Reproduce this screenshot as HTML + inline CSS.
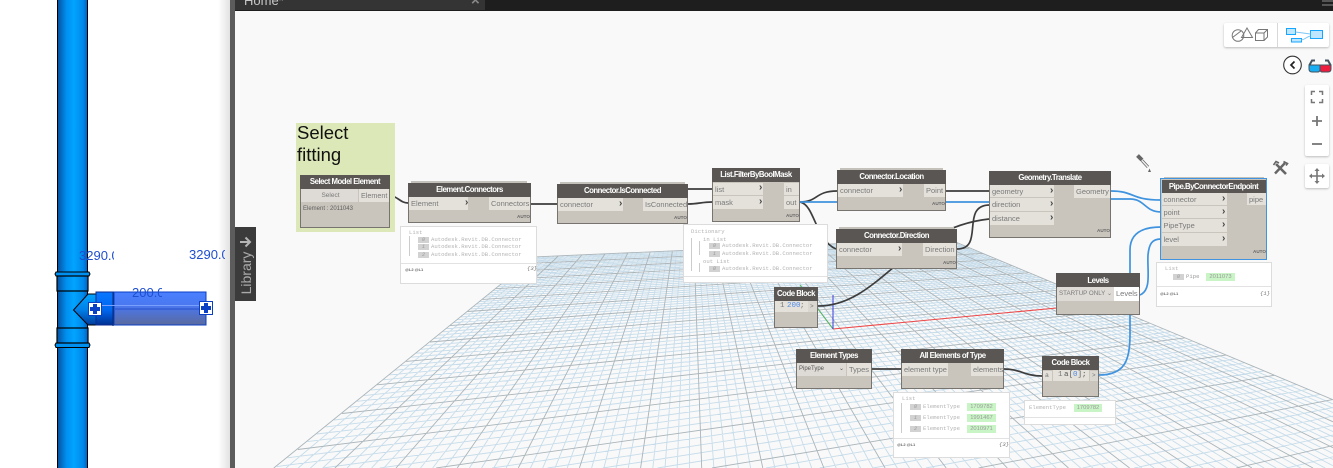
<!DOCTYPE html>
<html><head><meta charset="utf-8"><style>
html,body{margin:0;padding:0;width:1333px;height:468px;overflow:hidden;background:#fff;font-family:"Liberation Sans",sans-serif}
div,span{position:absolute}
svg{position:absolute;left:0;top:0}
#root{left:0;top:0;width:1333px;height:468px;overflow:hidden}
.b{background:#c9c4bc;border:1px solid #77736e;box-sizing:border-box}
.t{background:#5a5653;color:#fff;font:bold 7.8px/14px "Liberation Sans",sans-serif;letter-spacing:-.5px;text-align:center;white-space:nowrap}
.p{background:#e4e1da;color:#7a7a7a;font:7.5px/13px "Liberation Sans",sans-serif;padding-left:2px;box-sizing:border-box;white-space:nowrap}
.c{color:#444;font:bold 10px/12px "Liberation Sans",sans-serif}
.a{color:#666;font:bold 4.6px/6px "Liberation Sans",sans-serif}
.v{background:#fff;border:1px solid #dcdcdc;box-sizing:border-box}
.m{color:#b3b3b3;font:5.6px/7px "Liberation Mono",monospace;white-space:nowrap}
.i{background:#d2d2d2;color:#999;font:italic 5px/6px "Liberation Mono",monospace;text-align:center;width:11px;height:6px}
.g{background:#c9f5c6;color:#9a9a9a;font:5.8px/8px "Liberation Sans",sans-serif;text-align:center;height:8px}
.l{background:#e2e2e2;height:1px}
.d{color:#1f4fcf;font:13px/14px "Liberation Sans",sans-serif;overflow:hidden;white-space:nowrap}
.s{background:#fff;border-radius:2px;box-shadow:0 1px 2px rgba(0,0,0,.25)}
.f{color:#666;font:bold 4px/5px "Liberation Sans",sans-serif;white-space:nowrap}
#ui{left:0;top:0;width:1333px;height:468px;filter:blur(.25px)}
</style></head><body><div id="root">
<div style="left:0;top:0;width:228px;height:468px;background:#fff"></div>
<div style="left:218px;top:0;width:12px;height:468px;background:linear-gradient(90deg,#fff,#e2e2e2)"></div>
<div style="left:235px;top:11px;width:1098px;height:457px;background:#f9f9f9"></div>
<div style="left:235px;top:0;width:1098px;height:11px;background:#1e1e1e"></div>
<div style="left:235px;top:0;width:250px;height:10px;background:#343434;overflow:hidden"><span style="left:9px;top:-7px;color:#c8c8c8;font:13px/16px 'Liberation Sans',sans-serif">Home*</span><span style="left:236px;top:-7px;color:#888;font:bold 15px/16px 'Liberation Sans',sans-serif">×</span></div>
<div style="left:1322px;top:0;width:11px;height:2px;background:#555"></div>
<div style="left:1322px;top:4px;width:11px;height:2px;background:#555"></div>

<svg width="1333" height="468" viewBox="0 0 1333 468">
<defs><linearGradient id="pg" x1="0" x2="1" y1="0" y2="0"><stop offset="0" stop-color="#07509f"/><stop offset=".3" stop-color="#0090f0"/><stop offset=".55" stop-color="#00a4ff"/><stop offset=".85" stop-color="#0088ea"/><stop offset="1" stop-color="#0060c0"/></linearGradient>
<linearGradient id="bg1" x1="0" x2="0" y1="0" y2="1"><stop offset="0" stop-color="#0a78ff"/><stop offset=".55" stop-color="#0066ee"/><stop offset="1" stop-color="#00308f"/></linearGradient>
<linearGradient id="bg2" x1="0" x2="0" y1="0" y2="1"><stop offset="0" stop-color="#4a80ff"/><stop offset=".4" stop-color="#4a78f0"/><stop offset="1" stop-color="#5a6a9e"/></linearGradient>
<linearGradient id="bg3" x1="0" x2="0" y1="0" y2="1"><stop offset="0" stop-color="#00a4ff"/><stop offset=".5" stop-color="#0080e8"/><stop offset="1" stop-color="#003c9c"/></linearGradient></defs>
<rect x="57.5" y="0" width="30" height="468" fill="url(#pg)"/>
<path d="M57.500 0V468M87.500 0V468" stroke="#000" stroke-width="1"/>
<path d="M56 272H89L90 274 89 276H56L55 274Z" fill="#0090f0" stroke="#000" stroke-width="1"/>
<rect x="57" y="276" width="31" height="15" fill="url(#pg)" stroke="#000" stroke-width="1.2"/>
<path d="M56 343H89L90 345 89 347.500H56L55 345Z" fill="#0090f0" stroke="#000" stroke-width="1"/>
<rect x="57" y="328" width="31" height="15" fill="url(#pg)" stroke="#000" stroke-width="1.2"/>
<path d="M88 294H96V325H88L73.500 310Z" fill="url(#bg3)" stroke="#000" stroke-width="1"/>
<path d="M96 292H113V325H96Z" fill="url(#bg1)" stroke="#0a2a90" stroke-width="1"/>
<path d="M113 292V326" stroke="#0a2a70" stroke-width="1"/>
<path d="M114 292H206V325H114Z" fill="url(#bg2)" stroke="#0b3fc4" stroke-width="1"/>
<path d="M100 305.500H206" stroke="#7aa0ff" stroke-width="1"/>
<path d="M115 309H206" stroke="#1845c8" stroke-width=".8"/>
<g fill="#fff" stroke="#0b3fc4" stroke-width="1"><rect x="88.500" y="302.500" width="13" height="13"/><rect x="199.500" y="301.500" width="13" height="13"/></g>
<g fill="#0b3fc4"><path d="M93 304h4v3h3v4h-3v3h-4v-3h-3v-4h3z"/><path d="M204 303h4v3h3v4h-3v3h-4v-3h-3v-4h3z"/></g>
</svg>
<div class="d" style="left:79px;top:249px;width:35px">3290.0</div>
<div class="d" style="left:189px;top:248px;width:36px">3290.0</div>
<div class="d" style="left:132px;top:286px;width:30px">200.0</div>

<svg id="g" width="1333" height="468" viewBox="0 0 1333 468" fill="none"></svg>
<script>
(function(){
var VA=[690,131],VB=[2520,170],minor='',major='';
function clip(x1,y1,x2,y2){var t0=0,t1=1,dx=x2-x1,dy=y2-y1,ps=[-dx,dx,-dy,dy],qs=[x1-235,1333-x1,y1-11,468-y1];
for(var j=0;j<4;j++){if(ps[j]==0){if(qs[j]<0)return null;continue;}var r=qs[j]/ps[j];if(ps[j]<0){if(r>t1)return null;if(r>t0)t0=r;}else{if(r<t0)return null;if(r<t1)t1=r;}}
return [x1+t0*dx,y1+t0*dy,x1+t1*dx,y1+t1*dy];}
function seg(x1,y1,x2,y2,i){var c=clip(x1,y1,x2,y2);if(!c)return;var s='M'+c[0].toFixed(1)+' '+c[1].toFixed(1)+'L'+c[2].toFixed(1)+' '+c[3].toFixed(1);if(i%5==0)major+=s;else minor+=s;}
for(var i=0;i<=100;i++){var X=275+12.19*i,dx=X-VA[0];var t=119.2/(336+.0438*dx);seg(VA[0]+t*dx,VA[1]+336*t,VA[0]+2*dx,VA[1]+672,i);}
for(var k=0;k<=84;k++){var d=.00794-.00008*k;if(d<=0.0012)break;var Ly=131+1/d,Lx=275+(468-Ly)/.813,m=(VB[1]-Ly)/(VB[0]-Lx);var x=(Ly-m*Lx-243+.417*957)/(.417-m);seg(Lx,Ly,x,Ly+m*(x-Lx),k);}
document.getElementById('g').innerHTML='<path d="'+minor+'" stroke="#c6dcea" stroke-width=".9"/><path d="'+major+'" stroke="#aab5ba" stroke-width=".9"/>';
})();
</script>
<div style="left:230px;top:0;width:5px;height:468px;background:#5c5c5c"></div>

<div id="ui">
<svg width="1333" height="468" viewBox="0 0 1333 468" fill="none">
<path d="M833 329L1057 308" stroke="#f04848" stroke-width="1"/>
<path d="M833 329L800 285" stroke="#4caf50" stroke-width="1"/>
<path d="M833 329V295" stroke="#3a3adf" stroke-width="1"/>
<g stroke="#3d3d3d" stroke-width="1.7">
<path d="M390 196C398 196 400 203 408 203"/>
<path d="M531 204H557"/>
<path d="M688 189C698 189 702 189 712 189"/>
<path d="M688 204C698 204 702 202 712 202"/>
<path d="M800 202C818 202 815 191 837 191"/>
<path d="M800 202C815 205 815 240 836 249"/>
<path d="M946 191H989"/>
<path d="M957 249C985 249 960 206 989 205"/>
<path d="M818 306C880 306 905 228 989 219"/>
<path d="M872 369H901"/>
<path d="M1004 369C1020 369 1025 376 1042 376"/>
</g>
<g stroke="#3f93df" stroke-width="1.7">
<path d="M800 202H950C965 202 975 202 989 202"/>
<path d="M1111 191C1135 191 1130 200 1161 200"/>
<path d="M1111 199H1130C1145 199 1145 212 1161 212"/>
<path d="M1099 375C1125 375 1130 360 1130 335V250C1130 235 1140 227 1161 227"/>
<path d="M1140 295C1152 290 1147 270 1148 255C1149 244 1152 239 1161 239"/>
</g>
</svg>

<!-- note -->
<div style="left:296px;top:123px;width:99px;height:109px;background:#dde8b8"></div>
<div style="left:297px;top:122px;color:#111;font:18.500px/22px 'Liberation Sans',sans-serif">Select<br>fitting</div>

<!-- Select Model Element -->
<div class="b" style="left:300px;top:175px;width:90px;height:53px"></div>
<div class="t" style="left:300px;top:175px;width:90px">Select Model Element</div>
<div class="p" style="left:301px;top:189px;width:57px;height:13px;background:#dedbd6;text-align:center;font-size:6.500px">Select</div>
<div class="p" style="left:359px;top:189px;width:30px;height:13px;font-size:7.200px">Element</div>
<div style="left:303px;top:205px;color:#5f5f5f;font:6px/8px 'Liberation Sans',sans-serif;white-space:nowrap">Element : 2011043</div>

<!-- Element.Connectors -->
<div style="left:411px;top:181px;width:116px;height:3px;background:#c4c0ba"></div>
<div class="b" style="left:408px;top:183px;width:123px;height:40px"></div>
<div class="t" style="left:408px;top:183px;width:123px">Element.Connectors</div>
<div class="p" style="left:409px;top:197px;width:59px;height:13px">Element</div><div class="c" style="left:465px;top:197px">›</div>
<div class="p" style="left:489px;top:197px;width:41px;height:13px">Connectors</div>
<div class="a" style="left:517px;top:214px">AUTO</div>

<!-- Connector.IsConnected -->
<div style="left:560px;top:182px;width:125px;height:3px;background:#c4c0ba"></div>
<div class="b" style="left:557px;top:184px;width:131px;height:40px"></div>
<div class="t" style="left:557px;top:184px;width:131px">Connector.IsConnected</div>
<div class="p" style="left:558px;top:198px;width:65px;height:13px">connector</div><div class="c" style="left:619px;top:198px">›</div>
<div class="p" style="left:643px;top:198px;width:44px;height:13px">IsConnected</div>
<div class="a" style="left:674px;top:215px">AUTO</div>

<!-- List.FilterByBoolMask -->
<div class="b" style="left:712px;top:168px;width:88px;height:54px"></div>
<div class="t" style="left:712px;top:168px;width:88px">List.FilterByBoolMask</div>
<div class="p" style="left:713px;top:183px;width:50px;height:12px">list</div><div class="c" style="left:759px;top:182px">›</div>
<div class="p" style="left:713px;top:196px;width:50px;height:13px">mask</div><div class="c" style="left:759px;top:196px">›</div>
<div class="p" style="left:784px;top:183px;width:15px;height:12px">in</div>
<div class="p" style="left:784px;top:196px;width:15px;height:13px">out</div>
<div class="a" style="left:786px;top:213px">AUTO</div>

<!-- Connector.Location -->
<div style="left:840px;top:168px;width:103px;height:3px;background:#c4c0ba"></div>
<div class="b" style="left:837px;top:170px;width:109px;height:41px"></div>
<div class="t" style="left:837px;top:170px;width:109px">Connector.Location</div>
<div class="p" style="left:838px;top:184px;width:65px;height:13px">connector</div><div class="c" style="left:899px;top:184px">›</div>
<div class="p" style="left:924px;top:184px;width:21px;height:13px">Point</div>
<div class="a" style="left:932px;top:201px">AUTO</div>

<!-- Geometry.Translate -->
<div class="b" style="left:989px;top:171px;width:122px;height:67px"></div>
<div class="t" style="left:989px;top:171px;width:122px">Geometry.Translate</div>
<div class="p" style="left:990px;top:185px;width:64px;height:12px">geometry</div><div class="c" style="left:1050px;top:185px">›</div>
<div class="p" style="left:990px;top:198px;width:64px;height:13px">direction</div><div class="c" style="left:1050px;top:198px">›</div>
<div class="p" style="left:990px;top:212px;width:64px;height:13px">distance</div><div class="c" style="left:1050px;top:212px">›</div>
<div class="p" style="left:1074px;top:185px;width:36px;height:13px">Geometry</div>
<div class="a" style="left:1097px;top:228px">AUTO</div>

<!-- Connector.Direction -->
<div style="left:839px;top:227px;width:115px;height:3px;background:#c4c0ba"></div>
<div class="b" style="left:836px;top:229px;width:121px;height:40px"></div>
<div class="t" style="left:836px;top:229px;width:121px">Connector.Direction</div>
<div class="p" style="left:837px;top:243px;width:65px;height:13px">connector</div><div class="c" style="left:898px;top:243px">›</div>
<div class="p" style="left:923px;top:243px;width:33px;height:13px">Direction</div>
<div class="a" style="left:943px;top:260px">AUTO</div>

<!-- Pipe.ByConnectorEndpoint -->
<div style="left:1164px;top:177px;width:100px;height:3px;background:#c4c0ba"></div>
<div class="b" style="left:1160px;top:178px;width:107px;height:82px;border:1.500px solid #3f93df"></div>
<div class="t" style="left:1161.500px;top:179.500px;width:104px;height:13.500px">Pipe.ByConnectorEndpoint</div>
<div class="p" style="left:1161.500px;top:193px;width:65px;height:12px">connector</div><div class="c" style="left:1222px;top:193px">›</div>
<div class="p" style="left:1161.500px;top:206px;width:65px;height:12px">point</div><div class="c" style="left:1222px;top:206px">›</div>
<div class="p" style="left:1161.500px;top:219px;width:65px;height:13px">PipeType</div><div class="c" style="left:1222px;top:219px">›</div>
<div class="p" style="left:1161.500px;top:233px;width:65px;height:13px">level</div><div class="c" style="left:1222px;top:233px">›</div>
<div class="p" style="left:1247px;top:193px;width:19px;height:12px">pipe</div>
<div class="a" style="left:1253px;top:249px">AUTO</div>

<!-- Levels -->
<div class="b" style="left:1056px;top:273px;width:84px;height:42px"></div>
<div class="t" style="left:1056px;top:273px;width:84px;line-height:15px">Levels</div>
<div class="p" style="left:1057px;top:287px;width:57px;height:14px;background:#dedbd6;font-size:6.200px;line-height:14px">STARTUP ONLY<span style="left:50px;top:0;font-size:6px">⌄</span></div>
<div class="p" style="left:1114px;top:287px;width:25px;height:14px;background:#fff;line-height:14px">Levels</div>

<!-- Code Block 200 -->
<div class="b" style="left:774px;top:287px;width:44px;height:41px"></div>
<div class="t" style="left:774px;top:287px;width:44px">Code Block</div>
<div class="p" style="left:775px;top:301px;width:42px;height:11px;padding-left:5px;font:7.500px/11px 'Liberation Mono',monospace">1<span style="left:12px;top:0;color:#4f8be8">200</span><span style="left:25px;top:0">;</span></div>
<div class="p" style="left:808px;top:301px;width:9px;height:11px;background:#dad7d0;font:6px/11px 'Liberation Mono',monospace">&gt;</div>

<!-- Element Types -->
<div class="b" style="left:796px;top:349px;width:76px;height:40px"></div>
<div class="t" style="left:796px;top:349px;width:76px">Element Types</div>
<div class="p" style="left:797px;top:363px;width:49px;height:13px;background:#dedbd6;font-size:6px;color:#555">PipeType<span style="left:42px;top:0">⌄</span></div>
<div class="p" style="left:847px;top:363px;width:24px;height:13px">Types</div>

<!-- All Elements of Type -->
<div class="b" style="left:901px;top:349px;width:103px;height:40px"></div>
<div class="t" style="left:901px;top:349px;width:103px">All Elements of Type</div>
<div class="p" style="left:902px;top:363px;width:46px;height:13px">element type</div>
<div class="p" style="left:971px;top:363px;width:32px;height:13px">elements</div>

<!-- Code Block 2 -->
<div class="b" style="left:1042px;top:356px;width:57px;height:41px"></div>
<div class="t" style="left:1042px;top:356px;width:57px">Code Block</div>
<div class="p" style="left:1043px;top:371px;width:9px;height:10px;font:6.500px/10px 'Liberation Mono',monospace">a</div>
<div class="p" style="left:1053px;top:370px;width:36px;height:11px;padding-left:5px;font:7.500px/11px 'Liberation Mono',monospace">1<span style="left:11px;top:0;color:#555">a[<span style="position:static;color:#4f8be8">0</span>];</span></div>
<div class="p" style="left:1090px;top:371px;width:8px;height:10px;background:#dad7d0;font:6px/10px 'Liberation Mono',monospace">&gt;</div>

<!-- Preview 1 -->
<div class="v" style="left:400px;top:226px;width:137px;height:58px"></div>
<div class="m" style="left:409px;top:229px">List</div>
<div style="left:409px;top:236px;width:1px;height:20px;background:#ccc"></div>
<div class="i" style="left:418px;top:237px">0</div><div class="m" style="left:431px;top:236px">Autodesk.Revit.DB.Connector</div>
<div class="i" style="left:418px;top:244px">1</div><div class="m" style="left:431px;top:243px">Autodesk.Revit.DB.Connector</div>
<div class="i" style="left:418px;top:252px">2</div><div class="m" style="left:431px;top:251px">Autodesk.Revit.DB.Connector</div>
<div class="l" style="left:401px;top:263px;width:135px"></div>
<div class="f" style="left:405px;top:267px">@L2 @L1</div><div class="m" style="left:527px;top:265px;color:#777;font-style:italic">{3}</div>

<!-- Preview 2 -->
<div class="v" style="left:683px;top:224px;width:145px;height:59px"></div>
<div class="m" style="left:691px;top:228px">Dictionary</div>
<div style="left:691px;top:238px;width:1px;height:33px;background:#ccc"></div>
<div style="left:699px;top:241px;width:1px;height:14px;background:#ccc"></div>
<div style="left:699px;top:263px;width:1px;height:9px;background:#ccc"></div>
<div class="m" style="left:703px;top:236px">in List</div><div class="m" style="left:703px;top:258px">out List</div>
<div class="i" style="left:709px;top:243px">0</div><div class="m" style="left:722px;top:242px">Autodesk.Revit.DB.Connector</div>
<div class="i" style="left:709px;top:251px">1</div><div class="m" style="left:722px;top:250px">Autodesk.Revit.DB.Connector</div>
<div class="i" style="left:709px;top:266px">0</div><div class="m" style="left:722px;top:265px">Autodesk.Revit.DB.Connector</div>
<div class="l" style="left:684px;top:276px;width:143px"></div>

<!-- Preview 3 -->
<div class="v" style="left:1156px;top:262px;width:116px;height:45px"></div>
<div class="m" style="left:1165px;top:265px">List</div>
<div class="i" style="left:1173px;top:274px">0</div><div class="m" style="left:1186px;top:273px;color:#999">Pipe</div>
<div class="g" style="left:1206px;top:273px;width:29px">2011073</div>
<div class="l" style="left:1157px;top:286px;width:114px"></div>
<div class="f" style="left:1160px;top:291px">@L2 @L1</div><div class="m" style="left:1260px;top:290px;color:#777;font-style:italic">{1}</div>

<!-- Preview 4 -->
<div class="v" style="left:893px;top:392px;width:117px;height:66px"></div>
<div class="m" style="left:902px;top:395px">List</div>
<div style="left:901px;top:403px;width:1px;height:30px;background:#ccc"></div>
<div class="i" style="left:910px;top:404px">0</div><div class="m" style="left:923px;top:403px">ElementType</div><div class="g" style="left:967px;top:403px;width:29px">1709782</div>
<div class="i" style="left:910px;top:415px">1</div><div class="m" style="left:923px;top:414px">ElementType</div><div class="g" style="left:967px;top:414px;width:29px">1991467</div>
<div class="i" style="left:910px;top:426px">2</div><div class="m" style="left:923px;top:425px">ElementType</div><div class="g" style="left:967px;top:425px;width:29px">2010971</div>
<div class="l" style="left:894px;top:438px;width:115px"></div>
<div class="f" style="left:897px;top:442px">@L2 @L1</div><div class="m" style="left:999px;top:441px;color:#777;font-style:italic">{3}</div>

<!-- Preview 5 -->
<div class="v" style="left:1024px;top:400px;width:92px;height:25px"></div>
<div class="m" style="left:1029px;top:404px">ElementType</div><div class="g" style="left:1074px;top:404px;width:28px">1709782</div>
<div class="l" style="left:1025px;top:417px;width:90px"></div>

<!-- Library tab -->
<div style="left:235px;top:227px;width:21px;height:74px;background:#3b3b3b"></div>
<div style="left:218px;top:265px;width:56px;height:16px;transform:rotate(-90deg);color:#aaa;font:14px/16px 'Liberation Sans',sans-serif;text-align:center">Library</div>
<svg width="1333" height="468" viewBox="0 0 1333 468" fill="none">
<path d="M240 242H250M245.500 237.500L250 242L245.500 246.500" stroke="#b5b5b5" stroke-width="2"/>
</svg>

<!-- Right-hand controls -->
<div class="s" style="left:1224px;top:23px;width:105px;height:24px"></div>
<div style="left:1276.500px;top:23px;width:1px;height:24px;background:#d8d8d8"></div>
<div class="s" style="left:1305px;top:85px;width:24px;height:71px"></div>
<div class="s" style="left:1305px;top:164px;width:24px;height:24px"></div>
<svg width="1333" height="468" viewBox="0 0 1333 468" fill="none">
<g stroke="#777" stroke-width="1">
<circle cx="1238" cy="35.500" r="5.800"/><path d="M1247 28L1252.500 37.500H1241.500Z"/>
<path d="M1255.500 33H1264V40.500H1255.500ZM1255.500 33L1258.500 29.500H1267.500V37L1264 40.500M1264 33L1267.500 29.500"/>
<path d="M1232.500 37.500L1241 31"/>
</g>
<g stroke="#16a5ff" stroke-width="1">
<rect x="1286.500" y="28.500" width="9" height="6" fill="#bfe6ff"/><rect x="1310.500" y="30.500" width="12" height="8" fill="#bfe6ff"/><rect x="1291.500" y="38.500" width="10" height="3.500" fill="#bfe6ff"/>
<path d="M1295.500 32L1310.500 34M1301.500 40C1306 39 1306 37 1310.500 36" stroke="#7cc7f5"/></g>
<circle cx="1292.500" cy="65" r="8.800" fill="#fff" stroke="#333" stroke-width="1.100"/>
<path d="M1294.500 61.500L1291 65L1294.500 68.500" stroke="#222" stroke-width="1.700"/>
<path d="M1309.500 65L1312 60.500H1315M1330.500 65L1328 60.500H1325" stroke="#42535f" stroke-width="2"/>
<path d="M1309 65H1320V70C1320 71 1319 72 1318 72H1312C1310 72 1309 71 1309 69Z" fill="#19aef2" stroke="#42535f" stroke-width="1"/>
<path d="M1320 65H1331V69C1331 71 1330 72 1328 72H1322C1321 72 1320 71 1320 70Z" fill="#ee1c3c" stroke="#42535f" stroke-width="1"/>
<g stroke="#777" stroke-width="1.500">
<path d="M1311.500 95V91.500H1315M1319 91.500H1322.500V95M1322.500 99V102.500H1319M1315 102.500H1311.500V99"/>
<path d="M1312 121H1322M1317 116V126" stroke-width="1.800"/>
<path d="M1312 144H1322" stroke-width="1.800"/>
<path d="M1317 170V182M1311 176H1323" stroke-width="1.600"/>
</g>
<path d="M1317 168L1314.500 171H1319.500ZM1317 184L1314.500 181H1319.500ZM1309 176L1312 173.500V178.500ZM1325 176L1322 173.500V178.500Z" fill="#777"/>
<path d="M1276 164L1286 174" stroke="#666" stroke-width="2.600"/>
<path d="M1285 163L1275 173.500" stroke="#666" stroke-width="2.400"/>
<path d="M1273.500 165L1276 161.500L1279 163M1283.500 161.500L1287.500 163.500L1286 165.500" stroke="#666" stroke-width="1.600"/>
<path d="M1137.500 155.500L1142 160" stroke="#666" stroke-width="4"/>
<path d="M1142 160.500L1148 167" stroke="#666" stroke-width="3"/>
<path d="M1142 160.500L1148 167" stroke="#eee" stroke-width="1.500"/>
<path d="M1149.500 168.500L1148 172H1151Z" fill="#666"/>
</svg>
</div>
</div></body></html>
